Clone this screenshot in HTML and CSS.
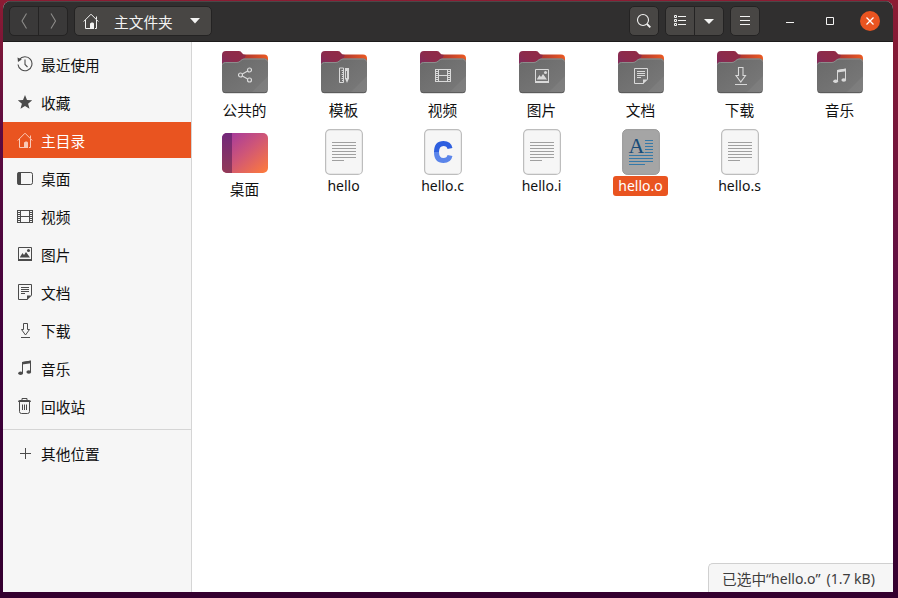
FILE: index.html
```html
<!DOCTYPE html>
<html lang="zh-CN">
<head>
<meta charset="utf-8">
<title>主文件夹</title>
<link rel="stylesheet" href="styles.css">
</head>
<body>
<svg class="defs" width="0" height="0" aria-hidden="true">
  <defs>
    <linearGradient id="tab" x1="0" y1="1" x2="1" y2="0"><stop offset="0" stop-color="#7b2a66"/><stop offset=".5" stop-color="#8c2b4c"/><stop offset="1" stop-color="#922b45"/></linearGradient>
    <linearGradient id="back" x1="0" x2="1"><stop offset=".4" stop-color="#b3392f"/><stop offset="1" stop-color="#ec5a22"/></linearGradient>
    <linearGradient id="front" x1="0" y1="0" x2="1" y2="1"><stop offset="0" stop-color="#696969"/><stop offset="1" stop-color="#7a7a7a"/></linearGradient>
    <linearGradient id="desk" x1="0" y1="0" x2="1" y2="1"><stop offset=".1" stop-color="#a73b9b"/><stop offset=".5" stop-color="#cf5677"/><stop offset="1" stop-color="#ff7c39"/></linearGradient>
    <linearGradient id="deskbar" x1="0" y1="0" x2="0" y2="1"><stop offset="0" stop-color="#72287a"/><stop offset="1" stop-color="#923a58"/></linearGradient>
    <clipPath id="deskclip"><rect width="46" height="40" rx="5"/></clipPath>
    <linearGradient id="blue" x1="0" y1="0" x2="0" y2="1"><stop offset=".5" stop-color="#2e5fdf"/><stop offset=".5" stop-color="#5b85ea"/></linearGradient>
  </defs>
  <symbol id="home" viewBox="0 0 16 16"><path d="M.7 8.5 8 1.2l7.3 7.3M2.5 7v8.5H7M13.5 7v8.5h-1.5M13.5 6V3.5" fill="none" stroke="currentColor"/><path d="M7 16v-5.500l1.500-1h1.500l1 1V16z" fill="currentColor"/></symbol>
  <symbol id="recent" viewBox="0 0 16 16"><path d="M2.300 3.600A7 7 0 1 1 1 8.500M8 3.500V8.500l2.500 2.500" fill="none" stroke="currentColor" stroke-width="1.100"/><path d="M.5 1.500 4.800 3.500 1 6z" fill="currentColor"/></symbol>
  <symbol id="star" viewBox="0 0 16 16"><path d="m8 1 2 5.100 5.200.2-4.100 3.400 1.400 5L8 11.900l-4.500 2.800 1.400-5L.8 6.300 6 6.100z" fill="currentColor"/></symbol>
  <symbol id="desktop" viewBox="0 0 16 16"><rect x=".6" y="2.500" width="14.900" height="12" rx="1.800" fill="none" stroke="currentColor"/><path d="M2 2h2v13H2a2 2 0 0 1-1.800-2V4A2 2 0 0 1 2 2z" fill="currentColor"/></symbol>
  <symbol id="video" viewBox="0 0 16 16"><path d="M3.500 2v13M12.500 2v13M3.500 2.500h9M3.500 8.500h9M3.500 14.500h9M.5 2v13M15.500 2v13" fill="none" stroke="currentColor"/><path d="M2 2v13M14 2v13" fill="none" stroke="currentColor" stroke-width="2" stroke-dasharray="1 1"/></symbol>
  <symbol id="picture" viewBox="0 0 16 16"><path d="M1.500 1.500h13v12h-13z" fill="none" stroke="currentColor"/><path d="M1 13h14v2H1zM3 11l2.500-4L7 9l2-3 4 5.500H3z" fill="currentColor"/><circle cx="11.500" cy="4.500" r="1.500" fill="currentColor"/></symbol>
  <symbol id="doc" viewBox="0 0 16 16"><path d="M10.500 15.500h-9v-15h13v11M4 3.500h8M4 5.500h8M4 7.500h8M4 9.500h4" fill="none" stroke="currentColor"/><path d="M10 16v-4.500h5z" fill="currentColor"/></symbol>
  <symbol id="download" viewBox="0 0 16 16"><path d="M6.500 1.500h4v6h2L8.500 13l-4-5.500h2zM4 15.500h9" fill="none" stroke="currentColor"/></symbol>
  <symbol id="music" viewBox="0 0 16 16"><path d="M5.500 13V2.500l8-1.300v10.700" fill="none" stroke="currentColor"/><path d="m5 2 9-1.400v2.700L5 4.500z" fill="currentColor"/><ellipse cx="3.600" cy="13.300" rx="2.400" ry="1.800" fill="currentColor"/><ellipse cx="11.800" cy="12" rx="2.400" ry="1.800" fill="currentColor"/></symbol>
  <symbol id="trash" viewBox="0 0 16 16"><path d="M2.500 4v9.500q0 2 2 2h6q2 0 2-2V4M5.500 6.500V12M7.500 6.500V12M9.500 6.500V12M5 2V.500h5V2" fill="none" stroke="currentColor"/><path d="M1 4q0-2 2-2h9q2 0 2 2z" fill="currentColor"/></symbol>
  <symbol id="plus" viewBox="0 0 16 16"><path d="M8.500 3v11M3 8.500h11" fill="none" stroke="currentColor"/></symbol>
  <symbol id="share" viewBox="0 0 16 16"><g fill="none" stroke="currentColor" stroke-width="1.200"><circle cx="3.500" cy="8" r="2"/><circle cx="12.500" cy="3" r="2"/><circle cx="12.500" cy="13" r="2"/><path d="m5.300 7 5.400-3M5.300 9l5.400 3"/></g></symbol>
  <symbol id="template" viewBox="0 0 16 16"><path d="M3.500 1v14.500h4V1zM7 3.500H5.500M7 5.500H6M7 7.500H5.500M7 9.500H6M7 11.500H5.500M7 13.500H6" fill="none" stroke="currentColor"/><path d="M9 1h4v10.500L11 16l-2-4.500z" fill="currentColor"/><path d="M10.500 4v7" stroke="#777"/></symbol>
  <symbol id="folder" viewBox="0 0 46 43"><path d="M20 3.500h22a4 4 0 0 1 4 4V20H10z" fill="url(#back)"/><path d="M0 20V4a4 4 0 0 1 4-4h13q2 0 3 2t4 2l-5 12z" fill="url(#tab)"/><path d="M0 14.500a3.500 3.500 0 0 1 3.500-3.500H15q2 0 3.500-1.600T22 7.500h20.500A3.500 3.500 0 0 1 46 11v27.500a3.500 3.500 0 0 1-3.500 3.500h-39A3.500 3.500 0 0 1 0 38.500z" fill="url(#front)"/><path d="M.5 13.500Q1 11.500 3.500 11.500H15q2 0 3.500-1.600T22 8h20.500q2.500 0 3 2.500" fill="none" stroke="#8d8d8d"/><path d="M46 25v13.500a3.500 3.500 0 0 1-3.500 3.500H29z" fill="#fff" opacity=".05"/><path d="M1 40.500q1 1.200 2.500 1.200h39q1.500 0 2.500-1.200" fill="none" stroke="#555"/></symbol>
  <symbol id="page" viewBox="0 0 38 46"><rect x=".6" y=".6" width="36.800" height="44.800" rx="4.500" fill="#f6f6f6" stroke="#bdbdbd" stroke-width="1.200"/></symbol>
  <symbol id="text" viewBox="0 0 38 46"><use href="#page"/><path d="M7 13.500h24M7 16.500h24M7 19.500h24M7 22.500h24M7 25.500h24M7 28.500h24M7 31.500h12" stroke="#a0a0a0"/></symbol>
</svg>
<div class="window">
  <header class="bar">
    <div class="group nav"><button class="btn dim"><svg width="28" height="28"><path d="m16.500 6.500-4.500 7.500 4.500 7.500" fill="none" stroke="currentColor" stroke-width="1.100"/></svg></button><button class="btn dim"><svg width="28" height="28"><path d="m12 6.500 4.500 7.500-4.500 7.500" fill="none" stroke="currentColor" stroke-width="1.100"/></svg></button></div>
    <button class="btn path"><svg class="ico"><use href="#home"/></svg><span>主文件夹</span><svg width="10" height="6"><path d="M0 0h10L5 5.500z" fill="currentColor"/></svg></button>
    <div class="spacer"></div>
    <button class="btn"><svg width="28" height="28"><circle cx="13" cy="13" r="5.500" fill="none" stroke="currentColor" stroke-width="1.100"/><path d="m17 17 3.300 3.300" stroke="currentColor" stroke-width="1.800"/></svg></button>
    <div class="group"><button class="btn"><svg width="28" height="28"><path d="M8.500 8.500h2v2h-2zM8.500 12.500h2v2h-2zM8.500 16.500h2v2h-2zM12 9.500h8M12 13.500h8M12 17.500h8" fill="none" stroke="currentColor"/></svg></button><button class="btn"><svg width="28" height="28"><path d="M9 12h10l-5 5z" fill="currentColor"/></svg></button></div>
    <button class="btn"><svg width="28" height="28"><path d="M9 9.500h10M9 13.500h10M9 17.500h10" stroke="currentColor"/></svg></button>
    <div class="controls"><svg width="8" height="8"><path d="M0 5.500h8" stroke="currentColor"/></svg><svg width="8" height="8"><path d="M.5.500h7v7h-7z" fill="none" stroke="currentColor"/></svg><svg width="20" height="20"><circle cx="10" cy="10" r="10" fill="#e95420"/><path d="m6.500 6.500 7 7m0-7-7 7" stroke="#fff" stroke-width="1.300"/></svg></div>
  </header>
  <div class="body">
    <nav class="side">
      <a class="row"><svg class="ico"><use href="#recent"/></svg>最近使用</a>
      <a class="row"><svg class="ico"><use href="#star"/></svg>收藏</a>
      <a class="row active"><svg class="ico"><use href="#home"/></svg>主目录</a>
      <a class="row"><svg class="ico"><use href="#desktop"/></svg>桌面</a>
      <a class="row"><svg class="ico"><use href="#video"/></svg>视频</a>
      <a class="row"><svg class="ico"><use href="#picture"/></svg>图片</a>
      <a class="row"><svg class="ico"><use href="#doc"/></svg>文档</a>
      <a class="row"><svg class="ico"><use href="#download"/></svg>下载</a>
      <a class="row"><svg class="ico"><use href="#music"/></svg>音乐</a>
      <a class="row"><svg class="ico"><use href="#trash"/></svg>回收站</a>
      <hr class="rule">
      <a class="row"><svg class="ico"><use href="#plus"/></svg>其他位置</a>
    </nav>
    <main class="files">
      <div class="grid">
        <div class="item"><svg class="folder" viewBox="0 0 46 43"><use href="#folder"/><use class="emblem" href="#share" x="15" y="16" width="16" height="16"/></svg><span class="label">公共的</span></div>
        <div class="item"><svg class="folder" viewBox="0 0 46 43"><use href="#folder"/><use class="emblem" href="#template" x="15" y="16" width="16" height="16"/></svg><span class="label">模板</span></div>
        <div class="item"><svg class="folder" viewBox="0 0 46 43"><use href="#folder"/><use class="emblem" href="#video" x="15" y="16" width="16" height="16"/></svg><span class="label">视频</span></div>
        <div class="item"><svg class="folder" viewBox="0 0 46 43"><use href="#folder"/><use class="emblem" href="#picture" x="15" y="17" width="16" height="16"/></svg><span class="label">图片</span></div>
        <div class="item"><svg class="folder" viewBox="0 0 46 43"><use href="#folder"/><use class="emblem" href="#doc" x="15" y="17" width="16" height="16"/></svg><span class="label">文档</span></div>
        <div class="item"><svg class="folder" viewBox="0 0 46 43"><use href="#folder"/><g class="emblem" fill="none" stroke="currentColor" stroke-width="1.100"><path d="M21.500 16.500h4.500v8h2.500L23.800 31 19 24.500h2.500zM18 33.500h12"/></g></svg><span class="label">下载</span></div>
        <div class="item last"><svg class="folder" viewBox="0 0 46 43"><use href="#folder"/><use class="emblem" href="#music" x="15" y="17" width="16" height="16"/></svg><span class="label">音乐</span></div>
        <div class="item desk"><svg width="46" height="40"><g clip-path="url(#deskclip)"><rect width="46" height="40" fill="url(#desk)"/><rect width="10" height="40" fill="url(#deskbar)"/></g></svg><span class="label">桌面</span></div>
        <div class="item file"><svg class="page"><use href="#text"/></svg><span class="label latin">hello</span></div>
        <div class="item file"><svg class="page" viewBox="0 0 38 46"><use href="#page"/><path d="M26 19.500q-1-5-6.500-5-7 0-7 8.500t7 8.500q5.500 0 6.500-5" fill="none" stroke="url(#blue)" stroke-width="5"/></svg><span class="label latin">hello.c</span></div>
        <div class="item file"><svg class="page"><use href="#text"/></svg><span class="label latin">hello.i</span></div>
        <div class="item file"><svg class="page" viewBox="0 0 38 46"><rect x=".6" y=".6" width="36.800" height="44.800" rx="4.500" fill="#a5a5a5" stroke="#999"/><text class="glyph" x="6.500" y="24">A</text><path d="M23 11.500h8M23 14.500h8M23 17.500h8M23 20.500h8M23 23.500h8M7 26.500h24M7 29.500h24M7 32.500h24M7 35.500h16" stroke="#3579a8"/></svg><span class="label latin selected">hello.o</span></div>
        <div class="item file"><svg class="page"><use href="#text"/></svg><span class="label latin">hello.s</span></div>
      </div>
      <div class="status">已选中<span class="info">“hello.o”</span><span class="info size">(1.7 kB)</span></div>
    </main>
  </div>
</div>
</body>
</html>
```
FILE: styles.css
```css
* { box-sizing: border-box; }
body {
  margin: 0;
  height: 598px;
  padding: 1px 5px 6px 3px;
  overflow: hidden;
  background:
    linear-gradient(#34002f, #34002f) 0 100% / 100% 6px no-repeat,
    linear-gradient(#8c1c33, #5d0e43 50%, #34002f) 100% 0 / 50% 100% no-repeat,
    linear-gradient(#8c1c33, #5d0b40 22%, #3f003b 60%, #34002f);
  font: 14.7px "Noto Sans CJK SC", "Noto Sans", sans-serif;
  color: #111;
}
svg { display: block; flex: none; }
.defs { position: absolute; }
.ico { width: 16px; height: 16px; }
.window {
  height: 591px;
  display: flex;
  flex-direction: column;
  border-radius: 8px 8px 0 0;
  overflow: hidden;
  background: #fff;
}
.bar {
  height: 41px;
  flex: none;
  display: flex;
  align-items: center;
  gap: 6px;
  padding: 0 13px 1px 6px;
  background: #302f2f;
  border-top: 1px solid #4a4848;
  border-bottom: 1px solid #1c1b1b;
  color: #f3f3f2;
}
.group { display: flex; }
.btn {
  width: 30px;
  height: 30px;
  padding: 0;
  border: 1px solid #242323;
  border-radius: 5px;
  background: #484644;
  color: inherit;
  font: inherit;
}
.group .btn:first-child { border-radius: 5px 0 0 5px; }
.group .btn:last-child { border-radius: 0 5px 5px 0; margin-left: -1px; }
.dim { background: #3a3939; color: #8d8c8a; }
.path { width: 138px; display: flex; align-items: center; padding: 0 10px 0 8px; }
.path span { margin: 0 17px 0 15px; white-space: nowrap; }
.spacer { flex: 1; }
.controls { display: flex; align-items: center; gap: 32px; margin-left: 20px; }
.controls svg:last-child { margin-left: -6px; }
.body { flex: 1; min-height: 0; display: flex; }
.side {
  width: 189px;
  flex: none;
  display: flex;
  flex-direction: column;
  gap: 2px;
  padding-top: 4px;
  background: #f6f6f6;
  border-right: 1px solid #d5d5d5;
}
.row {
  height: 36px;
  display: flex;
  align-items: center;
  gap: 8px;
  padding-left: 14px;
}
.row .ico { color: #4b4b4b; }
.active { background: #e95420; color: #fff; }
.active .ico { color: #f9c9b7; }
.rule { width: 100%; height: 1px; margin: 3px 0; border: 0; background: #d5d5d5; }
.files {
  flex: 1;
  display: flex;
  flex-direction: column;
  justify-content: space-between;
}
.grid {
  display: grid;
  grid-template-columns: repeat(7, 99px);
  grid-template-rows: 77px 80px;
  padding: 9px 0 0 3px;
}
.item { display: flex; flex-direction: column; align-items: center; }
.folder { width: 46px; height: 43px; }
.last { position: relative; left: 1px; }
.emblem { color: #d9d9d9; }
.label { line-height: 20px; margin-top: 6px; padding: 0 5px; border-radius: 3px; }
.desk { padding-top: 5px; }
.file { padding-top: 1px; }
.page { width: 38px; height: 46px; }
.latin { margin-top: 1px; font: 14px/20px "Noto Sans", sans-serif; }
.selected { background: #e95420; color: #fff; }
.glyph { font: 22px "Liberation Serif", serif; fill: #164b78; }
.status {
  align-self: flex-end;
  width: 185px;
  height: 29px;
  padding-left: 13px;
  display: flex;
  align-items: center;
  background: #f6f6f6;
  border: 1px solid #d0d0d0;
  border-width: 1px 0 0 1px;
  border-radius: 5px 0 0 0;
  color: #3d3d3d;
  white-space: nowrap;
}
.info { font: 14px "Noto Sans", sans-serif; }
.size { margin-left: 6px; }
```
